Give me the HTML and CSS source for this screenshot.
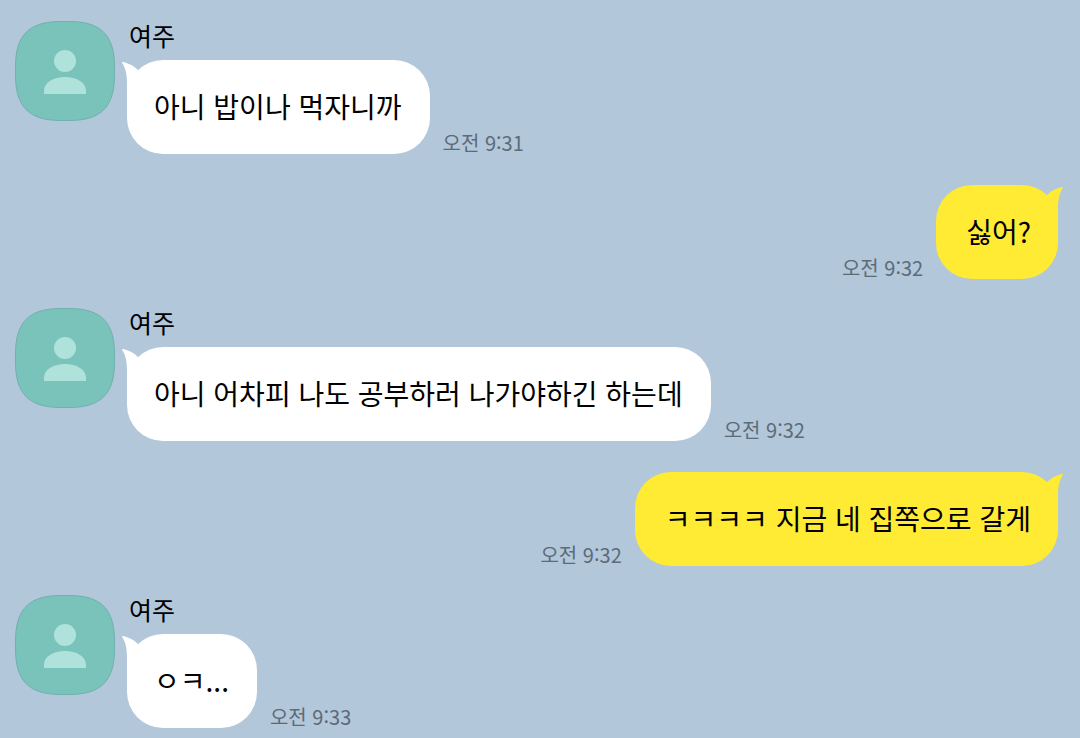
FILE: index.html
```html
<!DOCTYPE html>
<html lang="ko">
<head>
    <meta charset="UTF-8">
    <meta name="viewport" content="width=device-width, initial-scale=1.0">
    <title>여주</title>
    <link rel="stylesheet" href="styles.css">
</head>
<body>
    <svg class="defs" aria-hidden="true">
        <symbol id="avatar" viewBox="0 0 100 100">
            <path class="avatar-bg" d="M46 .5H54C86 .5 99.500 14 99.500 46V54C99.500 86 86 99.500 54 99.500H46C14 99.500 .5 86 .5 54V46C.5 14 14 .5 46 .5Z"/>
            <circle class="avatar-person" cx="50" cy="40" r="11"/>
            <path class="avatar-person" d="M29 73V70C29 61 39 56 50 56S71 61 71 70V73Z"/>
        </symbol>
        <symbol id="tail" viewBox="0 0 24 40">
            <path d="M0 2.500C0 2 1 2 2 2.300C7 3.500 12 6 16 10L24 16V40H5V24C5 15 4 9 0 2.500Z"/>
        </symbol>
    </svg>
    <main class="chat">
        <article class="message">
            <svg class="avatar"><use href="#avatar"/></svg>
            <div class="content">
                <div class="name">여주</div>
                <div class="row">
                    <p class="bubble"><svg class="tail"><use href="#tail"/></svg>아니 밥이나 먹자니까</p>
                    <time>오전 9:31</time>
                </div>
            </div>
        </article>
        <article class="message mine">
            <div class="row">
                <p class="bubble"><svg class="tail"><use href="#tail"/></svg>싫어?</p>
                <time>오전 9:32</time>
            </div>
        </article>
        <article class="message">
            <svg class="avatar"><use href="#avatar"/></svg>
            <div class="content">
                <div class="name">여주</div>
                <div class="row">
                    <p class="bubble"><svg class="tail"><use href="#tail"/></svg>아니 어차피 나도 공부하러 나가야하긴 하는데</p>
                    <time>오전 9:32</time>
                </div>
            </div>
        </article>
        <article class="message mine">
            <div class="row">
                <p class="bubble"><svg class="tail"><use href="#tail"/></svg>ㅋㅋㅋㅋ 지금 네 집쪽으로 갈게</p>
                <time>오전 9:32</time>
            </div>
        </article>
        <article class="message">
            <svg class="avatar"><use href="#avatar"/></svg>
            <div class="content">
                <div class="name">여주</div>
                <div class="row">
                    <p class="bubble"><svg class="tail"><use href="#tail"/></svg>ㅇㅋ...</p>
                    <time>오전 9:33</time>
                </div>
            </div>
        </article>
    </main>
</body>
</html>
```
FILE: styles.css
```css
*{
    box-sizing: border-box;
}
body{
    --color-bg: #b2c7da;
    --color-mine: #ffeb33;
    --color-time: #5c6b78;
    margin: 0;
    background-color: var(--color-bg);
    color: #000;
    font-family: "Noto Sans CJK KR", sans-serif;
}
.defs{
    display: none;
}
.chat{
    display: flex;
    flex-direction: column;
    gap: 29px;
    padding: 21px 22px 10px 15px;
}
.message{
    display: flex;
    align-items: flex-start;
    gap: 12px;
}
.mine{
    justify-content: flex-end;
    padding-top: 2px;
}
.avatar{
    flex: none;
    width: 100px;
    height: 100px;
}
.avatar-bg{
    fill: #79c3ba;
    stroke: #6fb0b0;
}
.avatar-person{
    fill: #b0e2dc;
}
.name{
    padding: 0 2px;
    margin-bottom: 11px;
    font-size: 25px;
    line-height: 28px;
}
.row{
    display: flex;
    align-items: flex-end;
    gap: 13px;
}
.mine .row{
    flex-direction: row-reverse;
}
.bubble{
    position: relative;
    margin: 0;
    padding: 26px 28px 28px 27px;
    border-radius: 36px;
    background-color: #fff;
    font-size: 28px;
    line-height: 40px;
}
.mine .bubble{
    padding-left: 30px;
    padding-right: 27px;
    background-color: var(--color-mine);
}
/* the corner tip lies over the bubble's rounded edge */
.tail{
    position: absolute;
    top: 0;
    left: -5px;
    width: 24px;
    height: 40px;
    fill: #fff;
}
.mine .tail{
    left: auto;
    right: -5px;
    transform: scaleX(-1);
    fill: var(--color-mine);
}
time{
    flex: none;
    color: var(--color-time);
    font-size: 20px;
    line-height: 22px;
}
```
